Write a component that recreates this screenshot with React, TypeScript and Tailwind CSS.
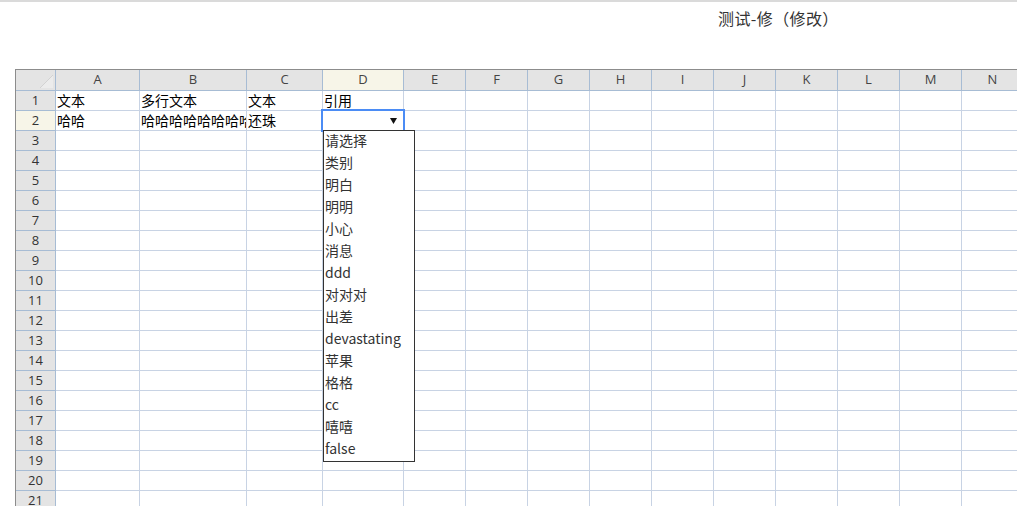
const columns = [
  { key: "A", width: 84 },
  { key: "B", width: 107 },
  { key: "C", width: 76 },
  { key: "D", width: 81 },
  { key: "E", width: 62 },
  { key: "F", width: 62 },
  { key: "G", width: 62 },
  { key: "H", width: 62 },
  { key: "I", width: 62 },
  { key: "J", width: 62 },
  { key: "K", width: 62 },
  { key: "L", width: 62 },
  { key: "M", width: 62 },
  { key: "N", width: 62 },
];

const cells: Record<string, string> = {
  A1: "文本",
  B1: "多行文本",
  C1: "文本",
  D1: "引用",
  A2: "哈哈",
  B2: "哈哈哈哈哈哈哈哈",
  C2: "还珠",
};

const options = [
  "请选择",
  "类别",
  "明白",
  "明明",
  "小心",
  "消息",
  "ddd",
  "对对对",
  "出差",
  "devastating",
  "苹果",
  "格格",
  "cc",
  "嘻嘻",
  "false",
];

const rows = Array.from({ length: 21 }, (_, i) => i + 1);

const gridCols =
  "grid grid-cols-[40px_84px_107px_76px_81px_62px_62px_62px_62px_62px_62px_62px_62px_62px_62px]";

const cjk = { fontFamily: '"Noto Sans CJK SC", "Noto Sans", sans-serif' };

function CornerCell() {
  return (
    <div className="flex h-[21px] items-end justify-end border-b border-r border-[#a7bcd4] bg-[#e4e4e4]">
      <svg width="13" height="13" viewBox="0 0 13 13" className="mb-[2px] mr-[2px]">
        <polygon points="13,0 13,13 0,13" fill="#ececec" />
        <line x1="13" y1="0" x2="0" y2="13" stroke="#d2d2d2" strokeWidth="1" />
      </svg>
    </div>
  );
}

function ColumnHeader({ label, active }: { label: string; active: boolean }) {
  return (
    <div
      className={`flex h-[21px] items-center justify-center border-b border-r border-[#a7bcd4] text-[13px] text-[#444] ${
        active ? "bg-[#f7f5e8]" : "bg-[#e4e4e4]"
      }`}
    >
      {label}
    </div>
  );
}

function SheetRow({ row }: { row: number }) {
  return (
    <div className={`${gridCols} h-[20px]`}>
      <div
        className={`flex items-center justify-center border-b border-r border-[#a7bcd4] text-[13px] leading-[19px] text-[#333] ${
          row === 2 ? "bg-[#f7f5e8]" : "bg-[#e4e4e4]"
        }`}
      >
        {row}
      </div>
      {columns.map((col) => (
        <div
          key={col.key}
          className="min-w-0 overflow-hidden border-b border-r border-[#c8d3e4] pl-[1px]"
        >
          <div
            className="overflow-hidden whitespace-nowrap text-[14px] leading-[18px] text-black"
            style={cjk}
          >
            {cells[`${col.key}${row}`] ?? ""}
          </div>
        </div>
      ))}
    </div>
  );
}

export default function App() {
  return (
    <div
      className="relative h-[506px] w-[1017px] overflow-hidden bg-white"
      style={{ fontFamily: '"Open Sans", "Noto Sans CJK SC", sans-serif' }}
    >
      <div className="h-[2px] bg-[#dadada]" />
      <div className="h-[67px] pl-[718px] pt-[5px]">
        <span className="text-[16px] leading-[22px] tracking-[0.4px] text-[#333]" style={cjk}>
          测试-修（修改）
        </span>
      </div>

      <div className="relative ml-[15px] w-[1010px] border-l border-t border-[#8c8c8c]">
        <div className={gridCols}>
          <CornerCell />
          {columns.map((col) => (
            <ColumnHeader key={col.key} label={col.key} active={col.key === "D"} />
          ))}
        </div>

        {rows.map((row) => (
          <SheetRow key={row} row={row} />
        ))}

        {/* selected cell D2 */}
        <div className="absolute left-[305px] top-[39px] flex h-[23px] w-[84px] items-center justify-end border-2 border-[#4b8cf5] pr-[6px]">
          <svg width="7" height="6" viewBox="0 0 7 6">
            <polygon points="0,0 7,0 3.5,6" fill="#111" />
          </svg>
        </div>

        {/* dropdown list */}
        <div
          className="absolute left-[307px] top-[60px] w-[92px] border border-[#333] bg-white"
          style={cjk}
        >
          {options.map((opt) => (
            <div
              key={opt}
              className="flex h-[22px] items-center whitespace-nowrap pb-[3px] pl-[1px] text-[14px] text-[#333]"
            >
              {opt}
            </div>
          ))}
        </div>
      </div>
    </div>
  );
}
